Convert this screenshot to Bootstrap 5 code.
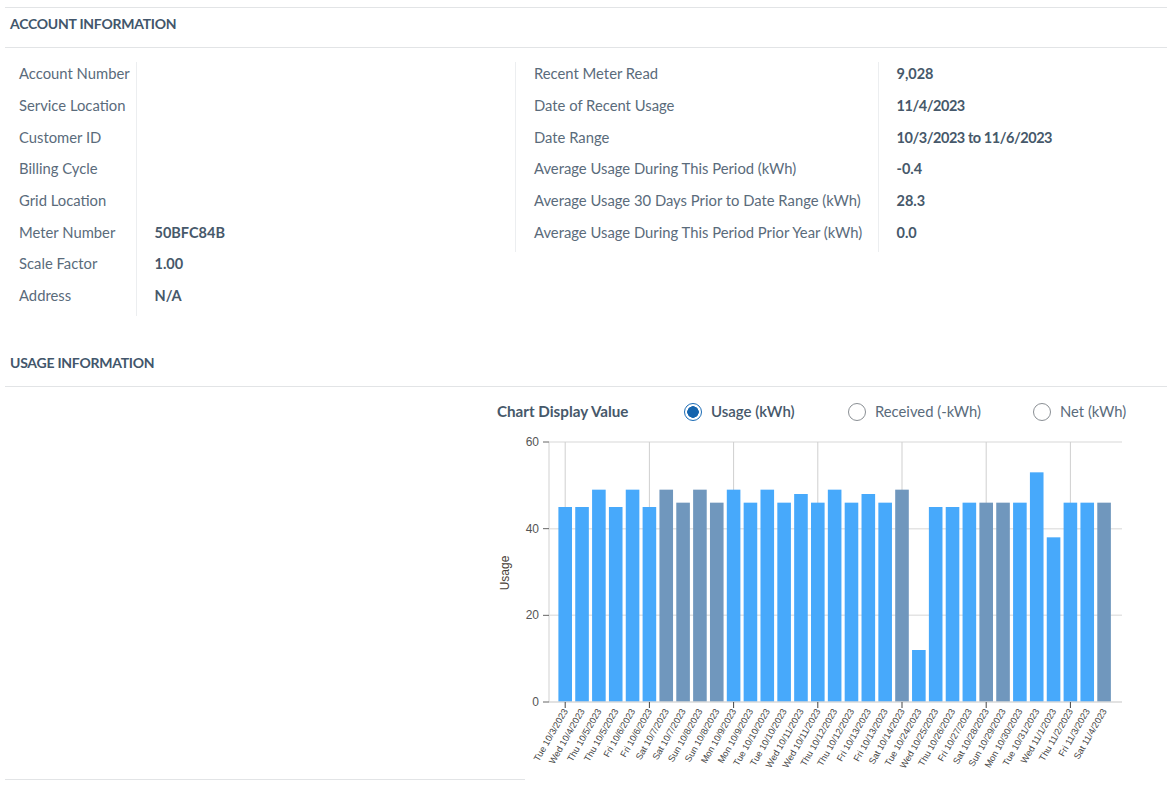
<!DOCTYPE html>
<html lang="en">
<head>
  <meta charset="UTF-8">
  <meta name="viewport" content="width=device-width, initial-scale=1.0">
  <title>Account Usage</title>
  <link href="https://cdn.jsdelivr.net/npm/bootstrap@5.3.2/dist/css/bootstrap.min.css" rel="stylesheet">
  <style>
    body { background: #fff; font-family: "Lato", "Noto Sans", sans-serif; font-size: 14.8px; color: #5a6b7b; overflow: hidden; }
    .page-wrap { padding: 7px 0 0 5px; }
    .sect-head { font-size: 14px; letter-spacing: -.25px; font-weight: 700; color: #42566b; padding: 0 5px; display: flex; align-items: center; border-bottom: 1px solid #e2e4e6; }
    .sect-head.first { border-top: 1px solid #e2e4e6; height: 41px; padding-bottom: 8px; }
    .sect-head.second { height: 47px; padding-bottom: 1px; }
    .acct-row { height: 292px; padding-top: 14px; }
    .info-left { width: 510px; }
    .info-tbl { margin: 0; border-collapse: collapse; }
    .info-tbl td { height: 31.7px; line-height: 20px; padding: 0 0 9px; vertical-align: middle; white-space: nowrap; }
    .info-tbl .lbl { color: #5a6b7b; }
    .info-tbl .val { font-size: 14.5px; font-weight: 700; color: #46586a; border-left: 1px solid #eceef0; padding-left: 18px; padding-top: 2px; }
    .info-tbl .date-val { letter-spacing: -.45px; }
    .info-left .lbl { padding-left: 14px; width: 131px; }
    .info-right { border-left: 1px solid #eceef0; padding-left: 18px; }
    .info-right .lbl { width: 344px; }
    .usage-body { height: 392px; }
    .chart-col { margin-left: 485px; }
    .chart-opts { padding-left: 7px; padding-top: 6px; height: 43px; }
    .chart-title { font-size: 15.2px; font-weight: 700; color: #46586a; width: 187px; }
    .opt-item { margin: 0; padding: 0; min-height: 0; display: flex; align-items: center; gap: 9px; }
    .opt-item .form-check-input { float: none; margin: 0; width: 18px; height: 18px; border: 1px solid #8a8f94; }
    .opt-item .form-check-input:checked[type=radio] { background-color: #fff; border-color: #1a6bb5; background-image: radial-gradient(circle, #1564ad 0 5.5px, #fff 6px); }
    .opt-on { width: 164px; font-size: 15px; font-weight: 600; color: #46586a; }
    .opt-rec { width: 185px; }
    .foot-rule { width: 520px; border-bottom: 1px solid #e2e4e6; }
    .chart-svg { display: block; }
    .chart-svg text { font-family: "Liberation Sans", Arial, sans-serif; }
  </style>
</head>
<body>
  <div class="page-wrap">
    <div class="sect-head first">ACCOUNT INFORMATION</div>
    <div class="acct-row d-flex">
      <div class="info-left">
        <table class="info-tbl">
          <tbody>
            <tr><td class="lbl">Account Number</td><td class="val"></td></tr>
            <tr><td class="lbl">Service Location</td><td class="val"></td></tr>
            <tr><td class="lbl">Customer ID</td><td class="val"></td></tr>
            <tr><td class="lbl">Billing Cycle</td><td class="val"></td></tr>
            <tr><td class="lbl">Grid Location</td><td class="val"></td></tr>
            <tr><td class="lbl">Meter Number</td><td class="val">50BFC84B</td></tr>
            <tr><td class="lbl">Scale Factor</td><td class="val">1.00</td></tr>
            <tr><td class="lbl">Address</td><td class="val">N/A</td></tr>
          </tbody>
        </table>
      </div>
      <div class="info-right align-self-start">
        <table class="info-tbl">
          <tbody>
            <tr><td class="lbl">Recent Meter Read</td><td class="val">9,028</td></tr>
            <tr><td class="lbl">Date of Recent Usage</td><td class="val date-val">11/4/2023</td></tr>
            <tr><td class="lbl">Date Range</td><td class="val date-val">10/3/2023 to 11/6/2023</td></tr>
            <tr><td class="lbl">Average Usage During This Period (kWh)</td><td class="val">-0.4</td></tr>
            <tr><td class="lbl">Average Usage 30 Days Prior to Date Range (kWh)</td><td class="val">28.3</td></tr>
            <tr><td class="lbl">Average Usage During This Period Prior Year (kWh)</td><td class="val">0.0</td></tr>
          </tbody>
        </table>
      </div>
    </div>
    <div class="sect-head second">USAGE INFORMATION</div>
    <div class="usage-body">
      <div class="chart-col">
        <div class="chart-opts d-flex align-items-center">
          <div class="chart-title">Chart Display Value</div>
          <div class="form-check opt-item opt-on">
            <input class="form-check-input" type="radio" name="chartVal" id="optUsage" checked>
            <label class="form-check-label" for="optUsage">Usage (kWh)</label>
          </div>
          <div class="form-check opt-item opt-rec">
            <input class="form-check-input" type="radio" name="chartVal" id="optRec">
            <label class="form-check-label" for="optRec">Received (-kWh)</label>
          </div>
          <div class="form-check opt-item">
            <input class="form-check-input" type="radio" name="chartVal" id="optNet">
            <label class="form-check-label" for="optNet">Net (kWh)</label>
          </div>
        </div>
        <div id="chart"></div>
      </div>
    </div>
    <div class="foot-rule"></div>
  </div>
  <script>
    // label, usage value
    const DAYS = [
      ['Tue 10/3/2023',45],['Wed 10/4/2023',45],['Thu 10/5/2023',49],['Thu 10/5/2023',45],
      ['Fri 10/6/2023',49],['Fri 10/6/2023',45],['Sat 10/7/2023',49],['Sat 10/7/2023',46],
      ['Sun 10/8/2023',49],['Sun 10/8/2023',46],['Mon 10/9/2023',49],['Mon 10/9/2023',46],
      ['Tue 10/10/2023',49],['Tue 10/10/2023',46],['Wed 10/11/2023',48],['Wed 10/11/2023',46],
      ['Thu 10/12/2023',49],['Thu 10/12/2023',46],['Fri 10/13/2023',48],['Fri 10/13/2023',46],
      ['Sat 10/14/2023',49],['Tue 10/24/2023',12],['Wed 10/25/2023',45],['Thu 10/26/2023',45],
      ['Fri 10/27/2023',46],['Sat 10/28/2023',46],['Sun 10/29/2023',46],['Mon 10/30/2023',46],
      ['Tue 10/31/2023',53],['Wed 11/1/2023',38],['Thu 11/2/2023',46],['Fri 11/3/2023',46],
      ['Sat 11/4/2023',46]
    ];

    // SVG uses page coordinates through its viewBox
    const y0 = 702, unit = 260 / 60, x0 = 558.4, pitch = 16.84, barW = 13.6;
    let grid = '', bars = '', ticks = '', labels = '';

    [0, 20, 40, 60].forEach(v => {
      const y = y0 - v * unit;
      if (v > 0) grid += `<line x1="549" x2="1122" y1="${y}" y2="${y}" stroke="#e4e4e4" stroke-width="1.5"/>`;
      ticks += `<line x1="543" x2="549" y1="${y}" y2="${y}" stroke="#666"/>`;
      labels += `<text x="539" y="${y + 4}" text-anchor="end" font-size="12" fill="#555">${v}</text>`;
    });

    DAYS.forEach((d, i) => {
      const x = x0 + i * pitch, cx = x + barW / 2;
      const weekend = d[0].startsWith('Sat') || d[0].startsWith('Sun');
      if (i % 5 === 0) {
        grid += `<line x1="${cx}" x2="${cx}" y1="442" y2="702" stroke="#cfcfcf"/>`;
        ticks += `<line x1="${cx}" x2="${cx}" y1="702" y2="708" stroke="#444"/>`;
      }
      bars += `<rect x="${x}" y="${y0 - d[1] * unit}" width="${barW}" height="${d[1] * unit}" fill="${weekend ? '#7097bd' : '#47a9fb'}"/>`;
      labels += `<text transform="translate(${cx + 3} 711) rotate(-60)" text-anchor="end" font-size="9.2" fill="#444">${d[0]}</text>`;
    });

    document.getElementById('chart').innerHTML = `
      <svg class="chart-svg" width="677" height="345" viewBox="490 430 677 345">
        ${grid}
        <line x1="549" x2="549" y1="442" y2="702" stroke="#e0e0e0" stroke-width="1.5"/>
        ${bars}
        <line x1="549" x2="1122" y1="702" y2="702" stroke="#d8d8d8" stroke-width="1.5"/>
        ${ticks}
        ${labels}
        <text transform="translate(509 573) rotate(-90)" text-anchor="middle" font-size="12" fill="#4a3f38">Usage</text>
      </svg>`;
  </script>
  <script src="https://cdn.jsdelivr.net/npm/bootstrap@5.3.2/dist/js/bootstrap.bundle.min.js"></script>
</body>
</html>
